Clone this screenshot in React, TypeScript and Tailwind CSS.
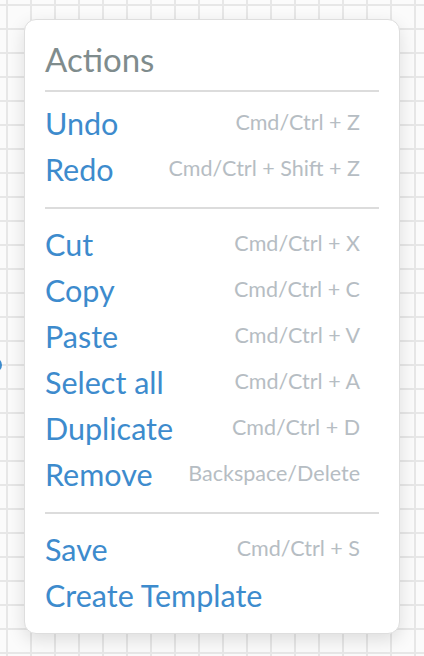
import React from "react";

type Item = { label: string; keys?: string };

const groups: Item[][] = [
  [
    { label: "Undo", keys: "Cmd/Ctrl + Z" },
    { label: "Redo", keys: "Cmd/Ctrl + Shift + Z" },
  ],
  [
    { label: "Cut", keys: "Cmd/Ctrl + X" },
    { label: "Copy", keys: "Cmd/Ctrl + C" },
    { label: "Paste", keys: "Cmd/Ctrl + V" },
    { label: "Select all", keys: "Cmd/Ctrl + A" },
    { label: "Duplicate", keys: "Cmd/Ctrl + D" },
    { label: "Remove", keys: "Backspace/Delete" },
  ],
  [
    { label: "Save", keys: "Cmd/Ctrl + S" },
    { label: "Create Template" },
  ],
];

function Row({ item }: { item: Item }) {
  return (
    <div className="flex h-[46px] items-center justify-between pr-[19px]">
      <span className="text-[30.5px] leading-none text-[#3d8bcd]">{item.label}</span>
      {item.keys && (
        <span className="text-[21.5px] leading-none text-[#b6bdc3]">{item.keys}</span>
      )}
    </div>
  );
}

export default function App(): ReturnType<React.FC> {
  return (
    <div className="relative h-[656px] w-[424px] overflow-hidden bg-[#fbfbfb] bg-[linear-gradient(to_right,#e7e7e7_2px,transparent_2px),linear-gradient(to_bottom,#e7e7e7_2px,transparent_2px)] bg-[size:24px_24px] bg-[position:6px_4px] pt-[19px] pl-6 font-['Lato',sans-serif]">
      <div className="absolute left-[-12px] top-[358px] h-[14px] w-[14px] rounded-full bg-[#3d8bcd]" />
      <div className="flex h-[615px] w-[376px] flex-col rounded-xl border border-[#dedede] bg-white px-5 pt-[22px] shadow-[0_6px_18px_rgba(0,0,0,0.12)]">
        <h2 className="text-[33px] leading-[34px] text-[#7f8c8d]">Actions</h2>
        {groups.map((group, i) => (
          <div key={i}>
            <div
              className={
                i === 0
                  ? "mt-[14px] mb-[8px] h-[2px] bg-[#dcdcdc]"
                  : "mt-[15px] mb-[12px] h-[2px] bg-[#dcdcdc]"
              }
            />
            {group.map((item) => (
              <Row key={item.label} item={item} />
            ))}
          </div>
        ))}
      </div>
    </div>
  );
}
